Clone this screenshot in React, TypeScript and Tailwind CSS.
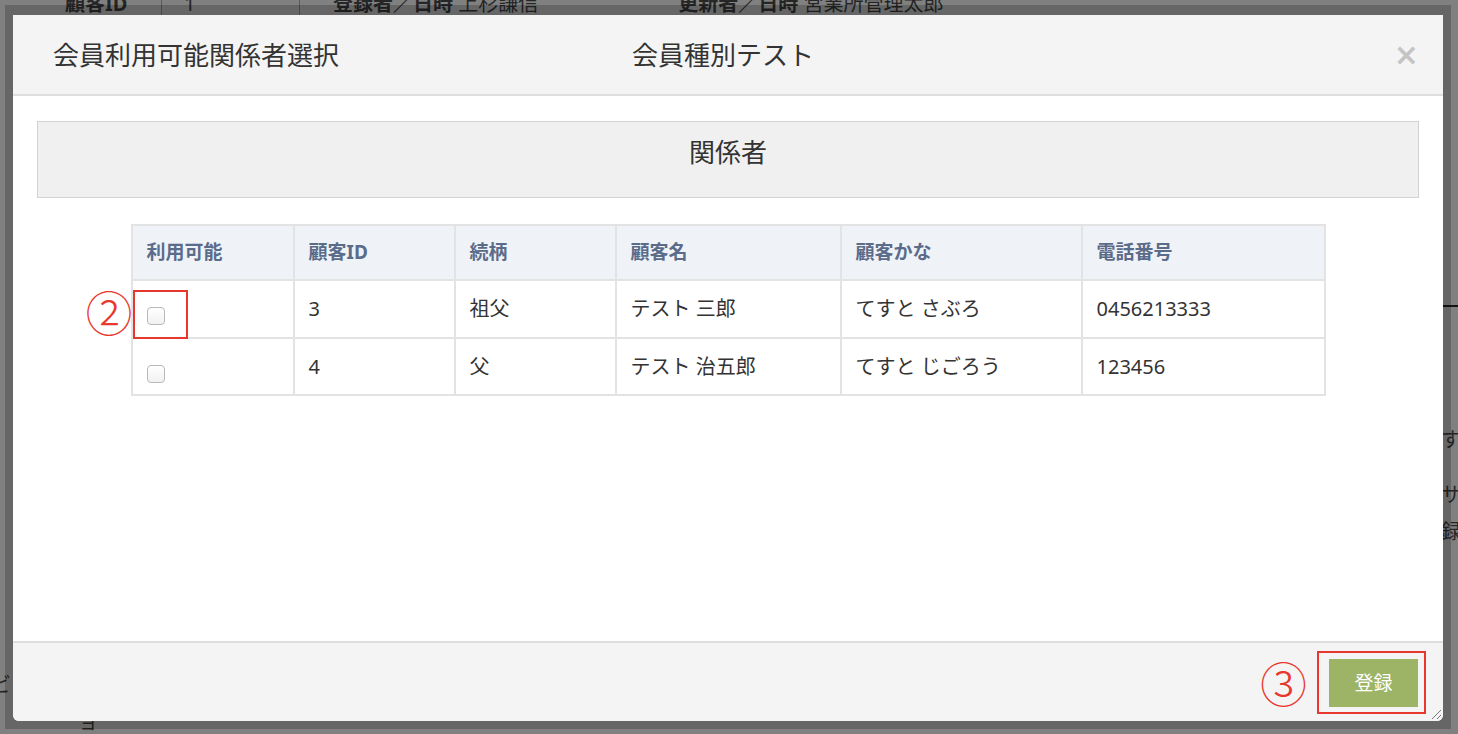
import React from "react";

const rows = [
  { id: "3", rel: "祖父", name: "テスト 三郎", kana: "てすと さぶろ", tel: "0456213333", marked: true },
  { id: "4", rel: "父", name: "テスト 治五郎", kana: "てすと じごろう", tel: "123456", marked: false },
];

const cols = [162, 161, 161, 225, 241, 243];
const heads = ["利用可能", "顧客ID", "続柄", "顧客名", "顧客かな", "電話番号"];

function Checkbox() {
  return (
    <span className="mt-[14px] block h-[18px] w-[18px] rounded-[4px] border border-[#b9b9b9] bg-gradient-to-b from-white to-[#f1f1f1]" />
  );
}

// dimmed page that sits behind the modal
function BackgroundPage() {
  return (
    <div className="flex h-full flex-col text-[20px] leading-[20px] text-[#262626]">
      <div className="-mt-[6px] flex h-[25px] shrink-0 items-start">
        <div className="h-full w-[162px] border-r border-[#5a5a5a] pl-[65px] font-bold">顧客ID</div>
        <div className="h-full w-[138px] border-r border-[#5a5a5a] pl-[22px]">1</div>
        <div className="pl-[33px]">
          <span className="font-bold">登録者／日時</span> 上杉謙信
        </div>
        <div className="pl-[140px]">
          <span className="font-bold">更新者／日時</span> 営業所管理太郎
        </div>
      </div>
      <div className="flex flex-1 justify-end">
        <div className="w-[17px]">
          <div className="mt-[286px] h-[2px] bg-[#141414]" />
          <div className="mt-[123px]">す</div>
          <div className="mt-[35px]">サ</div>
          <div className="mt-[17px]">録</div>
        </div>
      </div>
      <div className="h-[59px] shrink-0">
        <div className="-ml-[9px]">ビ</div>
        <div className="mt-[17px] pl-[78px]">ョ</div>
      </div>
    </div>
  );
}

function Modal() {
  return (
    <div className="relative flex h-[706px] w-[1430px] flex-col overflow-hidden rounded-b-[6px] bg-white text-[#333]">
      {/* Header */}
      <div className="flex h-[81px] shrink-0 items-center border-b-2 border-[#dedede] bg-[#f4f4f4] pl-[40px] pr-[24px] text-[26px] leading-none">
        <h2 className="w-[579px] font-normal">会員利用可能関係者選択</h2>
        <span>会員種別テスト</span>
        <span className="ml-auto font-['DejaVu_Sans',sans-serif] text-[30px] font-bold text-[#c4c4c4]">×</span>
      </div>

      {/* Body */}
      <div className="flex-1 px-[24px] pt-[25px]">
        <div className="h-[77px] border border-[#d2d2d2] bg-[#f0f0f0] pt-[15px] text-center text-[26px] leading-[30px]">
          関係者
        </div>

        <table className="mx-auto mt-[26px] w-[1193px] table-fixed border-collapse border-2 border-[#e3e3e3]">
          <colgroup>
            {cols.map((w, i) => (
              <col key={i} style={{ width: w }} />
            ))}
          </colgroup>
          <thead>
            <tr className="h-[55px] bg-[#eff3f8]">
              {heads.map((h) => (
                <th
                  key={h}
                  className="border-2 border-[#e3e3e3] px-[14px] text-left text-[19px] font-bold text-[#5b6b8a]"
                >
                  {h}
                </th>
              ))}
            </tr>
          </thead>
          <tbody className="text-[20px]">
            {rows.map((r, i) => (
              <tr key={r.id} className={i === 0 ? "h-[58px]" : "h-[57px]"}>
                <td className="relative border-2 border-[#e3e3e3] px-[14px] align-middle">
                  <Checkbox />
                  {r.marked && (
                    <div className="absolute left-0 top-[9px] h-[49px] w-[55px] border-2 border-[#e8372c]">
                      <span className="absolute right-full top-[-5px] mr-[2px] font-['Noto_Sans_CJK_JP',sans-serif] text-[47px] font-light leading-none text-[#e8372c]">
                        ②
                      </span>
                    </div>
                  )}
                </td>
                <td className="border-2 border-[#e3e3e3] px-[14px]">{r.id}</td>
                <td className="border-2 border-[#e3e3e3] px-[14px]">{r.rel}</td>
                <td className="border-2 border-[#e3e3e3] px-[14px]">{r.name}</td>
                <td className="border-2 border-[#e3e3e3] px-[14px]">{r.kana}</td>
                <td className="border-2 border-[#e3e3e3] px-[14px]">{r.tel}</td>
              </tr>
            ))}
          </tbody>
        </table>
      </div>

      {/* Footer */}
      <div className="flex h-[80px] shrink-0 items-start justify-end border-t-2 border-[#dedede] bg-[#f4f4f4] pr-[17px] pt-[8px]">
        <span className="mr-[10px] mt-[7px] font-['Noto_Sans_CJK_JP',sans-serif] text-[47px] font-light leading-none text-[#e8372c]">③</span>
        <div className="border-2 border-[#e8372c] pb-[5px] pl-[10px] pr-[6px] pt-[6px]">
          <button className="flex h-[48px] w-[89px] items-center justify-center bg-[#9db466] text-[19px] text-white">
            登録
          </button>
        </div>
      </div>

      {/* resize grip */}
      <svg className="absolute bottom-[1px] right-[1px] h-[12px] w-[12px]" viewBox="0 0 12 12">
        <path d="M11 2 L2 11 M11 7 L7 11" stroke="#777" strokeWidth="1" />
      </svg>
    </div>
  );
}

export default function App() {
  return (
    <div className="relative h-[734px] w-[1458px] overflow-hidden bg-[#808080] font-['Noto_Sans','Noto_Sans_CJK_JP',sans-serif]">
      <BackgroundPage />
      <div className="absolute inset-0 pl-[5px] pt-[5px]">
        <div className="h-[724px] w-[1446px] bg-black/20 pl-[8px] pt-[10px]">
          <Modal />
        </div>
      </div>
    </div>
  );
}
